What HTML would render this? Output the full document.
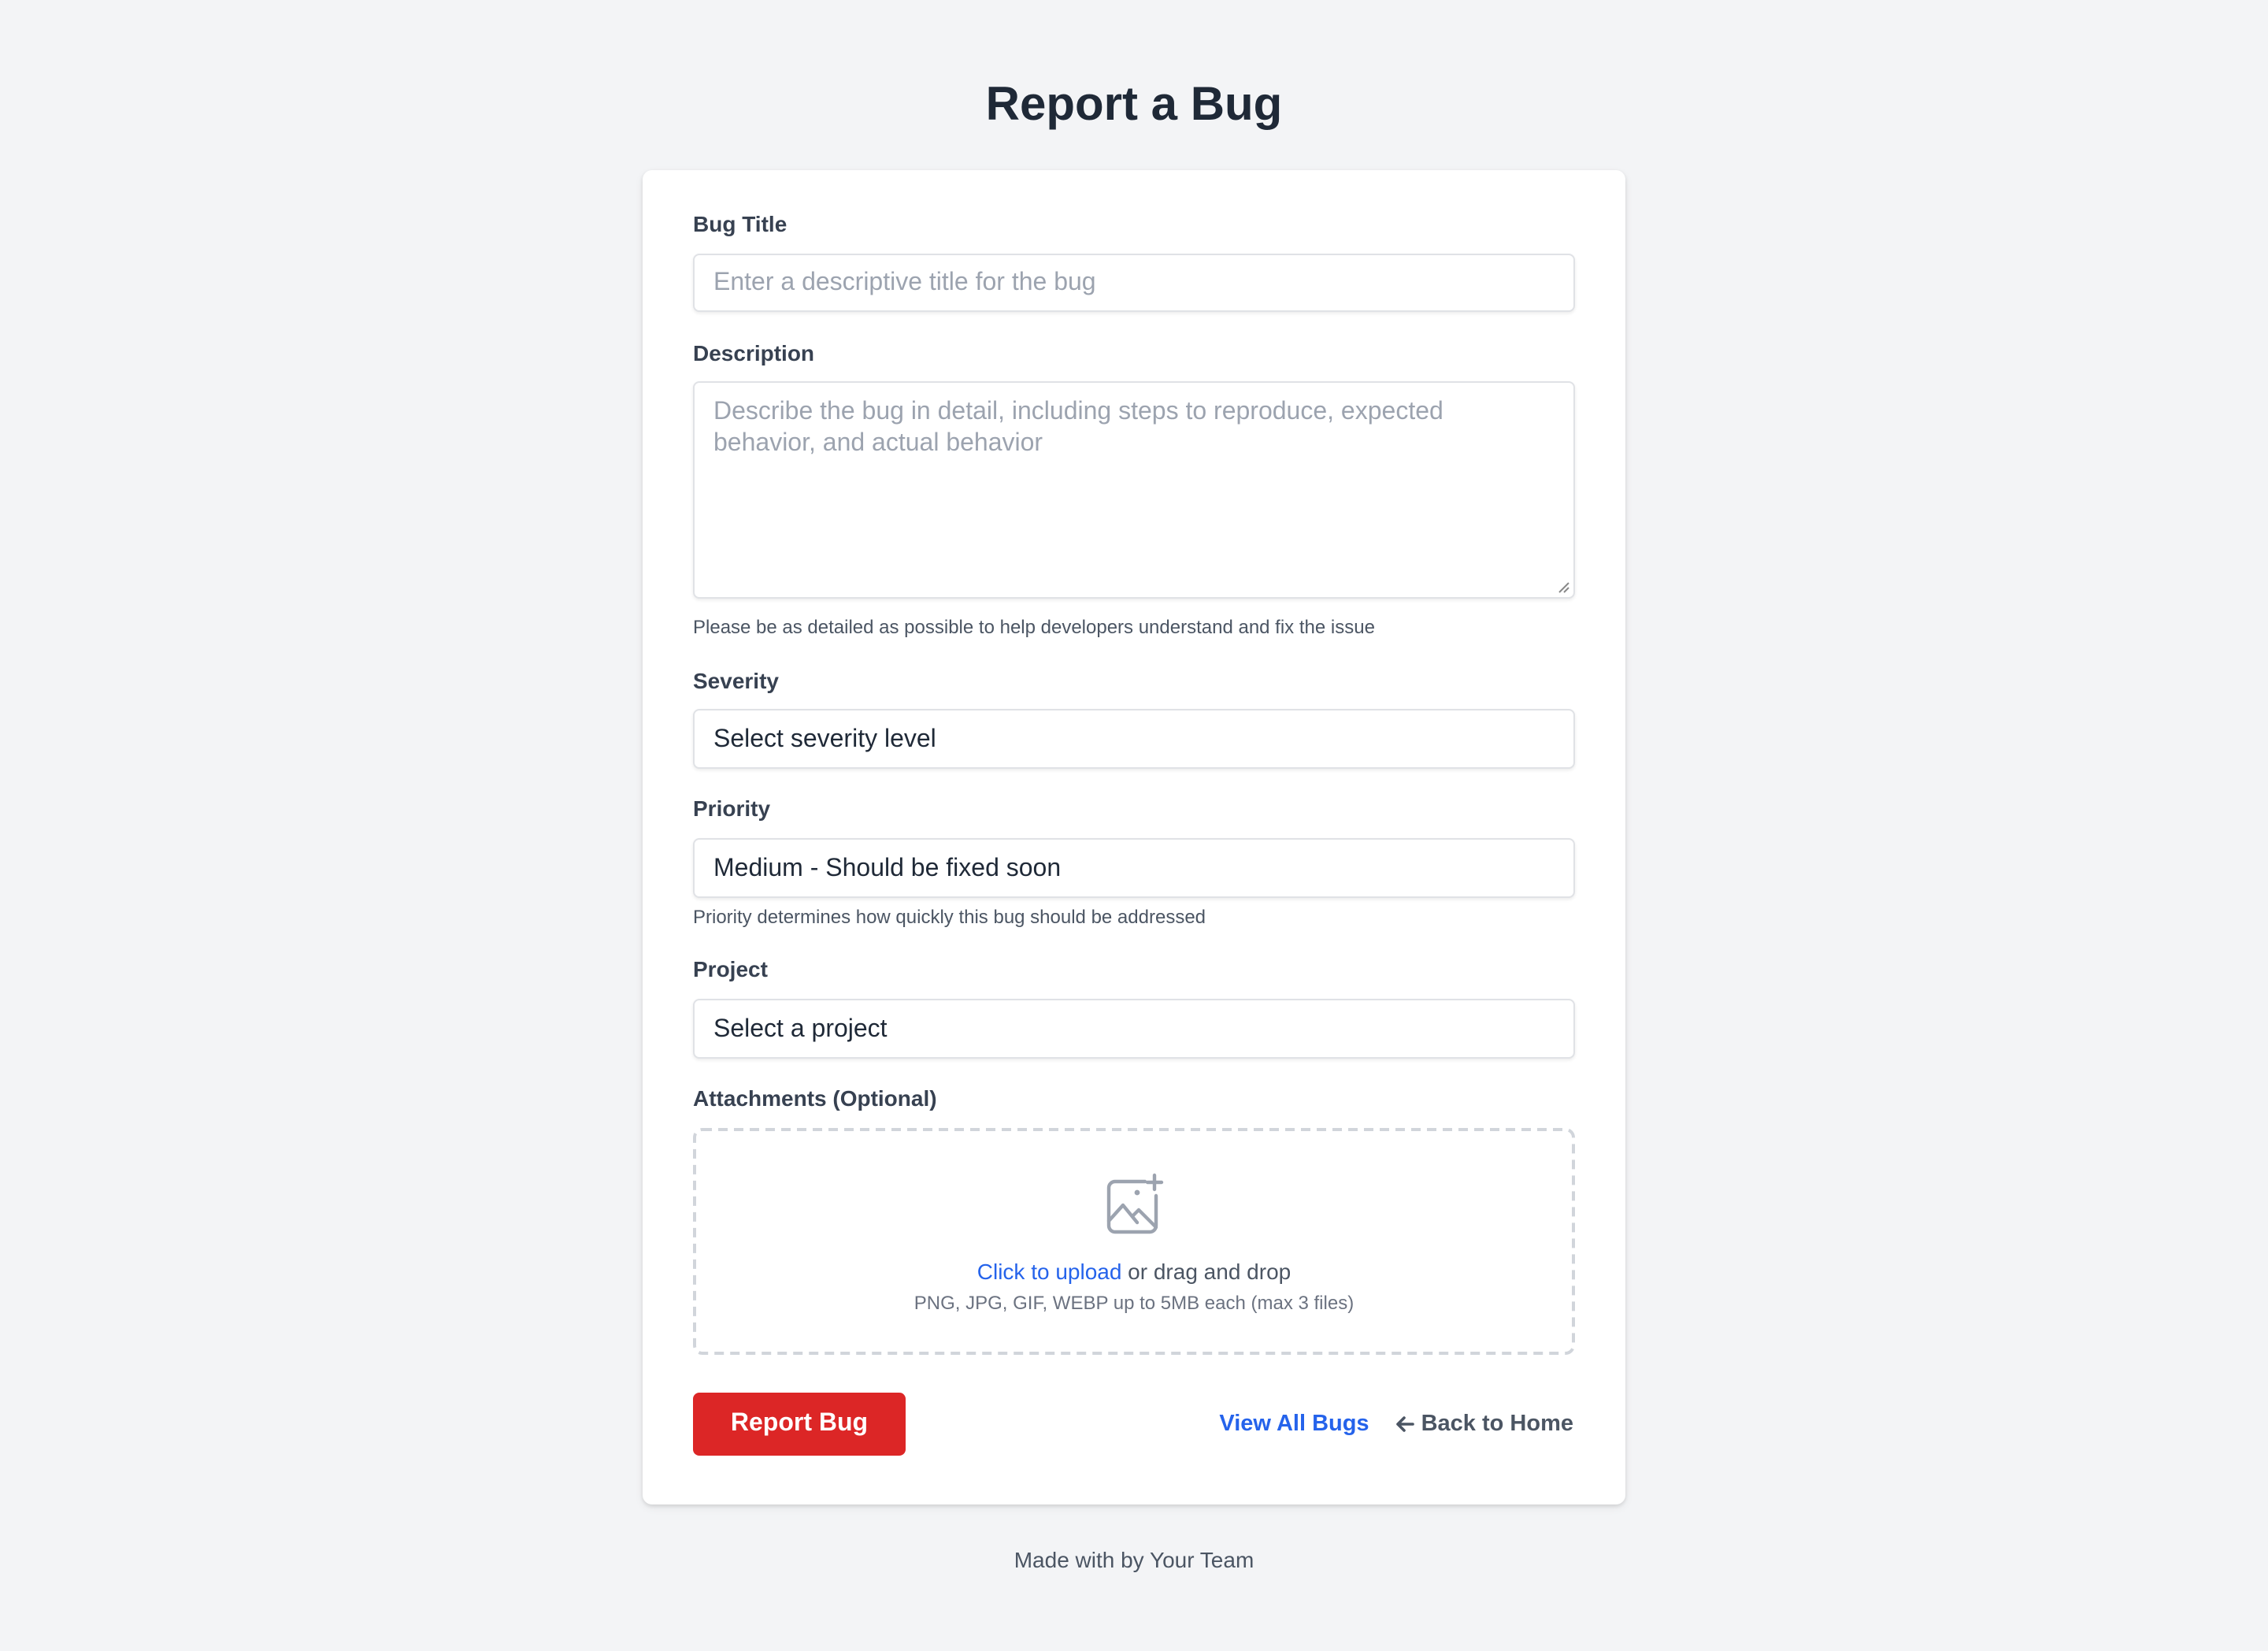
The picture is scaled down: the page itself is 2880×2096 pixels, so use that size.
<!DOCTYPE html>
<html><head><meta charset="utf-8"><style>
html,body{margin:0;padding:0;background:#f3f4f6;}
#s{position:relative;width:1440px;height:1048px;transform:scale(2);transform-origin:0 0;font-family:"Liberation Sans",sans-serif;color:#1f2937;}
.a{position:absolute;white-space:nowrap;}
h1{position:absolute;left:0;width:1440px;top:48px;margin:0;text-align:center;font-size:30px;line-height:38px;font-weight:700;color:#1f2937;}
.card{position:absolute;left:408px;top:108px;width:624px;height:847px;background:#fff;border-radius:6px;box-shadow:0 1px 3px rgba(0,0,0,.12),0 2px 6px rgba(0,0,0,.06);}
.lbl{position:absolute;left:440px;font-size:14px;font-weight:700;color:#374151;line-height:18px;}
.in{position:absolute;left:440px;border:1px solid #e0e2e6;border-radius:4px;background:#fff;box-shadow:0 1px 2px rgba(0,0,0,.08);font-size:16px;line-height:20px;padding:0 12px;box-sizing:border-box;width:560px;}
.ph{color:#9ca3af;}
.help{position:absolute;left:440px;font-size:12px;color:#4b5563;line-height:16px;}
</style></head><body><div id="s">
<h1>Report a Bug</h1>
<div class="card"></div>
<div class="lbl" style="top:133px">Bug Title</div>
<div class="in ph" style="top:161px;height:37px;padding-top:8px">Enter a descriptive title for the bug</div>
<div class="lbl" style="top:215px">Description</div>
<div class="in ph" style="top:242px;height:138px;padding-top:9px;padding-right:60px;white-space:normal">Describe the bug in detail, including steps to reproduce, expected behavior, and actual behavior
<svg style="position:absolute;right:2px;bottom:2px" width="8" height="8"><path d="M7 1L1 7M7 4L4 7" stroke="#888" stroke-width="1"/></svg></div>
<div class="help" style="top:390px">Please be as detailed as possible to help developers understand and fix the issue</div>
<div class="lbl" style="top:423px">Severity</div>
<div class="in" style="top:450px;height:38px;padding-top:9px">Select severity level</div>
<div class="lbl" style="top:504px">Priority</div>
<div class="in" style="top:532px;height:38px;padding-top:9px">Medium - Should be fixed soon</div>
<div class="help" style="top:574px">Priority determines how quickly this bug should be addressed</div>
<div class="lbl" style="top:606px">Project</div>
<div class="in" style="top:634px;height:38px;padding-top:9px">Select a project</div>
<div class="lbl" style="top:688px">Attachments (Optional)</div>
<div class="a" style="left:440px;top:716px;width:560px;height:144px;border:2px dashed #d1d5db;border-radius:6px;box-sizing:border-box"></div>
<svg class="a" style="left:700px;top:742px" width="44" height="44" viewBox="0 0 44 44" fill="none" stroke="#9ca3af" stroke-width="2.2" stroke-linecap="round" stroke-linejoin="round">
<path d="M27 8H8a4 4 0 0 0-4 4v24a4 4 0 0 0 4 4h22a4 4 0 0 0 4-4V17"/>
<path d="M33 4v9M28.5 8.5h9"/>
<path d="M4 33l9-10 9 11M19 30l4-4 11 11"/>
<circle cx="22" cy="15" r="0.6" fill="#9ca3af"/>
</svg>
<div class="a" style="left:0;width:1440px;top:798px;text-align:center;font-size:14px;line-height:18px;color:#4b5563"><span style="color:#2563eb">Click to upload</span> or drag and drop</div>
<div class="a" style="left:0;width:1440px;top:819px;text-align:center;font-size:12px;line-height:16px;color:#6b7280">PNG, JPG, GIF, WEBP up to 5MB each (max 3 files)</div>
<div class="a" style="left:440px;top:884px;width:135px;height:40px;background:#dc2626;border-radius:4px;color:#fff;font-weight:700;font-size:16px;line-height:40px;text-align:center">Report Bug</div>
<div class="a" style="right:441px;top:895px;font-size:14.5px;font-weight:700;line-height:18px;display:flex;align-items:center">
<span style="color:#2563eb">View All Bugs</span>
<svg style="margin-left:17px;margin-right:4px" width="12" height="12" viewBox="0 0 12 12" fill="none" stroke="#4b5563" stroke-width="1.8" stroke-linecap="round" stroke-linejoin="round"><path d="M11 6H1.5M5.5 2L1.5 6l4 4"/></svg>
<span style="color:#4b5563">Back to Home</span></div>
<div class="a" style="left:0;width:1440px;top:981px;text-align:center;font-size:14px;line-height:18px;color:#4b5563">Made with by Your Team</div>
</div></body></html>
